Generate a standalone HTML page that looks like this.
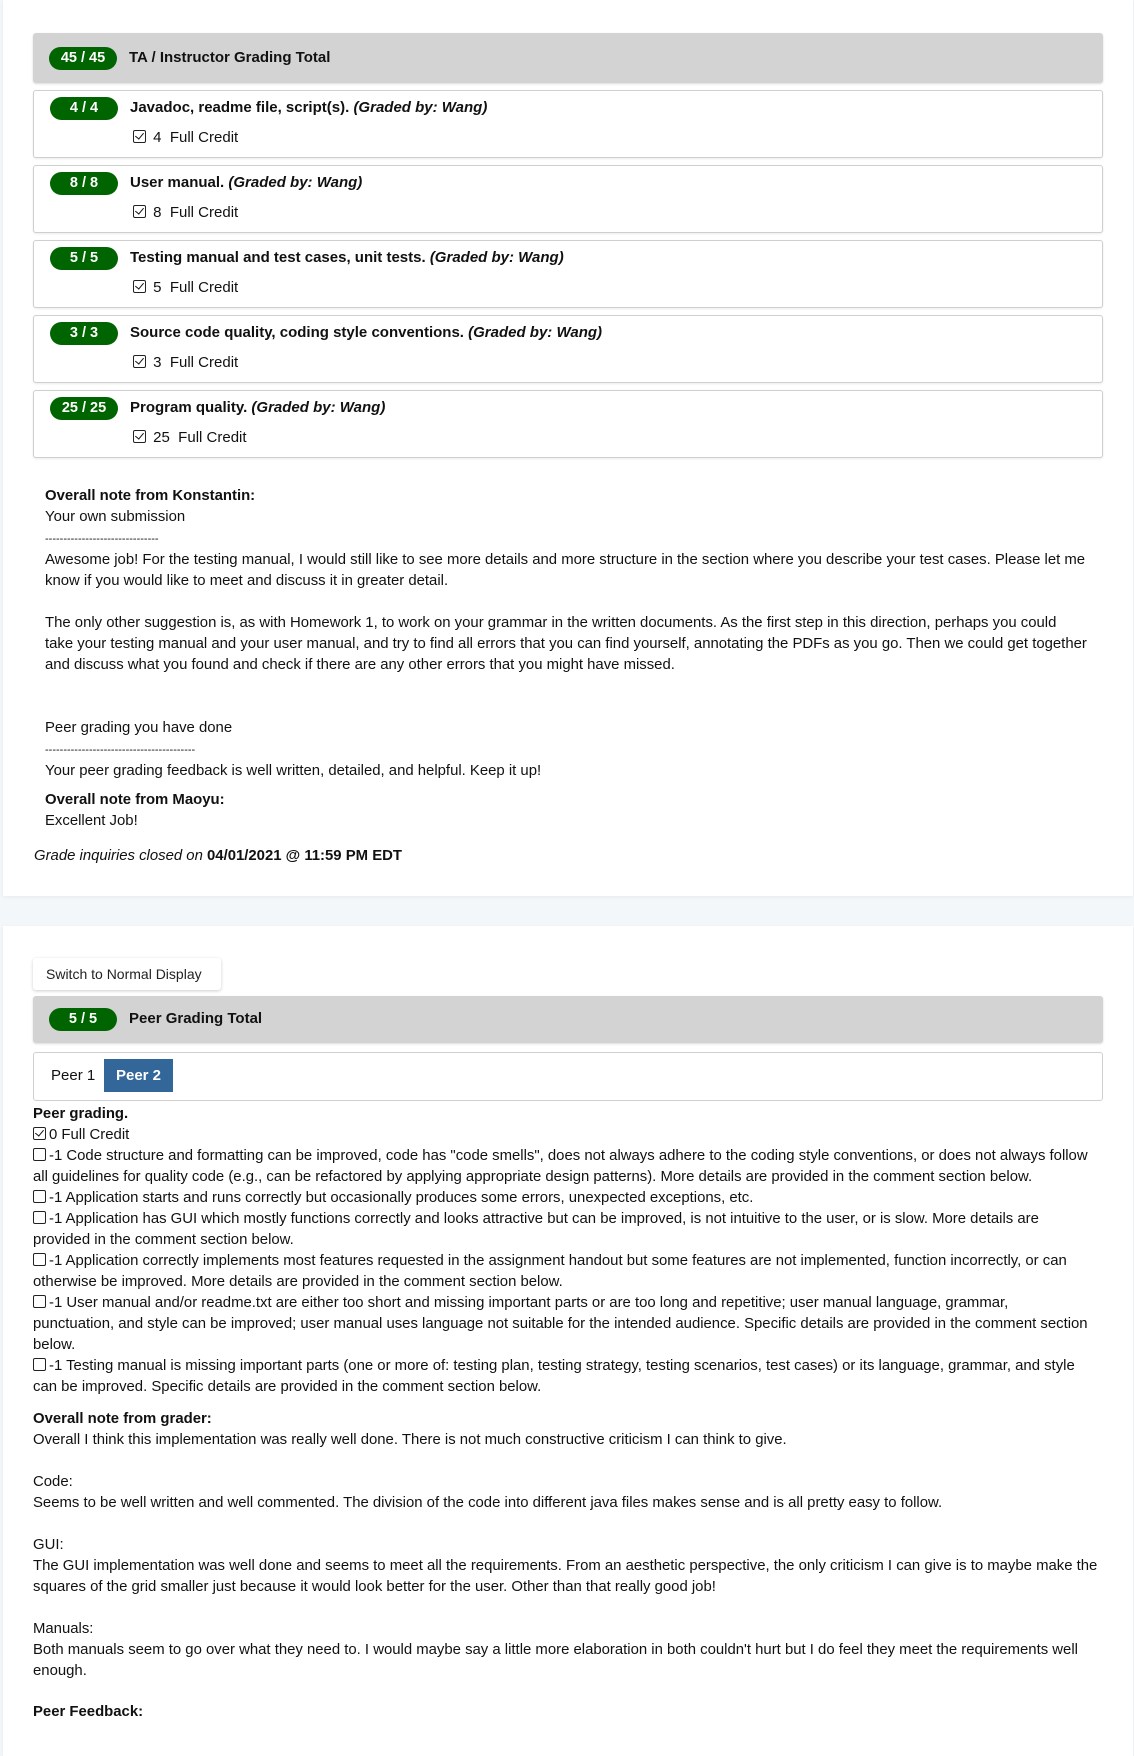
<!DOCTYPE html>
<html><head><meta charset="utf-8"><style>
*{margin:0;padding:0;box-sizing:border-box}
body{width:1134px;height:1744px;background:#f4f7fa;font-family:"Liberation Sans",sans-serif;font-size:15px;color:#111;position:relative;overflow:hidden}
.card{position:absolute;left:3px;width:1130px;background:#fff;box-shadow:0 1px 4px rgba(0,0,0,.06)}
.a{position:absolute;white-space:nowrap}
.hdr{position:absolute;left:33px;width:1070px;background:#d3d3d3;border-radius:3px;box-shadow:0 1px 2px rgba(0,0,0,.15)}
.box{position:absolute;left:33px;width:1070px;height:68px;border:1px solid #cfcfcf;border-radius:3px;background:#fff;box-shadow:0 1px 2px rgba(0,0,0,.08)}
.badge{position:absolute;left:16px;width:68px;height:23px;border-radius:12px;background:#006400;color:#fff;font-weight:bold;font-size:14.5px;text-align:center;line-height:23px}
.t{position:absolute;left:96px;font-weight:bold;font-size:15px;white-space:nowrap}
.cb{display:inline-block;width:13px;height:13px;border:1.5px solid #222;border-radius:2px;vertical-align:-1px;position:relative;margin-right:3px}
.cb.c::after{content:"";position:absolute;left:3px;top:0px;width:4px;height:7px;border:solid #111;border-width:0 1.7px 1.7px 0;transform:rotate(40deg)}
.txt{position:absolute;left:45px;line-height:21px;white-space:nowrap;font-size:14.9px}
.txt2{position:absolute;left:33px;line-height:21px;white-space:nowrap;font-size:14.9px}
</style></head><body>
<div class="card" style="top:0;height:896px"></div>
<div class="card" style="top:926px;height:830px"></div>

<div class="hdr" style="top:33px;height:50px"><div class="badge" style="top:14px">45 / 45</div><div class="t" style="top:16px">TA / Instructor Grading Total</div></div>

<div class="box" style="top:90px"><div class="badge" style="top:6px">4 / 4</div><div class="t" style="top:8px">Javadoc, readme file, script(s). <i>(Graded by: Wang)</i></div><div class="a" style="left:99px;top:38px"><span class="cb c"></span> 4&nbsp; Full Credit</div></div>
<div class="box" style="top:165px"><div class="badge" style="top:6px">8 / 8</div><div class="t" style="top:8px">User manual. <i>(Graded by: Wang)</i></div><div class="a" style="left:99px;top:38px"><span class="cb c"></span> 8&nbsp; Full Credit</div></div>
<div class="box" style="top:240px"><div class="badge" style="top:6px">5 / 5</div><div class="t" style="top:8px">Testing manual and test cases, unit tests. <i>(Graded by: Wang)</i></div><div class="a" style="left:99px;top:38px"><span class="cb c"></span> 5&nbsp; Full Credit</div></div>
<div class="box" style="top:315px"><div class="badge" style="top:6px">3 / 3</div><div class="t" style="top:8px">Source code quality, coding style conventions. <i>(Graded by: Wang)</i></div><div class="a" style="left:99px;top:38px"><span class="cb c"></span> 3&nbsp; Full Credit</div></div>
<div class="box" style="top:390px"><div class="badge" style="top:6px">25 / 25</div><div class="t" style="top:8px">Program quality. <i>(Graded by: Wang)</i></div><div class="a" style="left:99px;top:38px"><span class="cb c"></span> 25&nbsp; Full Credit</div></div>

<div class="txt" style="top:486px"><b>Overall note from Konstantin:</b><br>Your own submission<br><span style="font-size:11px">-------------------------------</span><br>Awesome job! For the testing manual, I would still like to see more details and more structure in the section where you describe your test cases. Please let me<br>know if you would like to meet and discuss it in greater detail.<br><br>The only other suggestion is, as with Homework 1, to work on your grammar in the written documents. As the first step in this direction, perhaps you could<br>take your testing manual and your user manual, and try to find all errors that you can find yourself, annotating the PDFs as you go. Then we could get together<br>and discuss what you found and check if there are any other errors that you might have missed.<br><br><br>Peer grading you have done<br><span style="font-size:11px">-----------------------------------------</span><br>Your peer grading feedback is well written, detailed, and helpful. Keep it up!</div>
<div class="txt" style="top:790px"><b>Overall note from Maoyu:</b><br>Excellent Job!</div>
<div class="txt" style="top:846px;left:34px"><i>Grade inquiries closed on</i> <b>04/01/2021 @ 11:59 PM EDT</b></div>

<div class="a" style="left:33px;top:958px;width:188px;height:32px;border-radius:3px;background:#fff;box-shadow:0 1px 3px rgba(0,0,0,.2);font-size:14px;line-height:32px;padding-left:13px;color:#222">Switch to Normal Display</div>
<div class="hdr" style="top:996px;height:47px"><div class="badge" style="top:12px">5 / 5</div><div class="t" style="top:14px">Peer Grading Total</div></div>
<div class="a" style="left:33px;top:1052px;width:1070px;height:49px;border:1px solid #cfcfcf;border-radius:3px;background:#fff">
<div class="a" style="left:17px;top:14px;font-size:15px">Peer 1</div>
<div class="a" style="left:70px;top:6px;width:69px;height:33px;background:#336699;color:#fff;font-weight:bold;font-size:15px;line-height:33px;text-align:center">Peer 2</div>
</div>

<div class="txt2" style="top:1104px"><b>Peer grading.</b><br><span class="cb c"></span>0 Full Credit<br><span class="cb"></span>-1 Code structure and formatting can be improved, code has "code smells", does not always adhere to the coding style conventions, or does not always follow<br>all guidelines for quality code (e.g., can be refactored by applying appropriate design patterns). More details are provided in the comment section below.<br><span class="cb"></span>-1 Application starts and runs correctly but occasionally produces some errors, unexpected exceptions, etc.<br><span class="cb"></span>-1 Application has GUI which mostly functions correctly and looks attractive but can be improved, is not intuitive to the user, or is slow. More details are<br>provided in the comment section below.<br><span class="cb"></span>-1 Application correctly implements most features requested in the assignment handout but some features are not implemented, function incorrectly, or can<br>otherwise be improved. More details are provided in the comment section below.<br><span class="cb"></span>-1 User manual and/or readme.txt are either too short and missing important parts or are too long and repetitive; user manual language, grammar,<br>punctuation, and style can be improved; user manual uses language not suitable for the intended audience. Specific details are provided in the comment section<br>below.<br><span class="cb"></span>-1 Testing manual is missing important parts (one or more of: testing plan, testing strategy, testing scenarios, test cases) or its language, grammar, and style<br>can be improved. Specific details are provided in the comment section below.</div>
<div class="txt2" style="top:1409px"><b>Overall note from grader:</b><br>Overall I think this implementation was really well done. There is not much constructive criticism I can think to give.<br><br>Code:<br>Seems to be well written and well commented. The division of the code into different java files makes sense and is all pretty easy to follow.<br><br>GUI:<br>The GUI implementation was well done and seems to meet all the requirements. From an aesthetic perspective, the only criticism I can give is to maybe make the<br>squares of the grid smaller just because it would look better for the user. Other than that really good job!<br><br>Manuals:<br>Both manuals seem to go over what they need to. I would maybe say a little more elaboration in both couldn't hurt but I do feel they meet the requirements well<br>enough.</div>
<div class="txt2" style="top:1702px"><b>Peer Feedback:</b></div>
</body></html>
